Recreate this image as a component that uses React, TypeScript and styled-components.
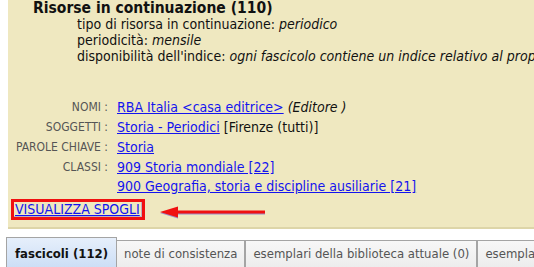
import React from "react";
import styled, { createGlobalStyle } from "styled-components";

const Global = createGlobalStyle`
  html, body { margin: 0; padding: 0; background: #ffffff; overflow: hidden; }
  body { font-family: "DejaVu Sans Condensed", "DejaVu Sans", sans-serif; font-stretch: condensed; }
`;

const Page = styled.div`
  width: 534px;
  height: 267px;
  overflow: hidden;
`;

const Panel = styled.section`
  margin-left: 8px;
  height: 229px;
  box-sizing: border-box;
  background: #efe8c0;
  border-bottom: 2px solid #ddd5a8;
  color: #111;
  font-size: 14px;
  overflow: hidden;
`;

const Title = styled.h3`
  margin: 0 0 0 25px;
  font-size: 15.5px;
  font-weight: bold;
  line-height: 16px;
  color: #111;
`;

const Details = styled.div`
  margin-left: 69px;
  line-height: 16px;
  white-space: nowrap;
`;

const Em = styled.i`
  font-style: italic;
`;

const Rows = styled.div`
  margin-top: 33px;
  display: flex;
  flex-direction: column;
`;

const Row = styled.div`
  display: grid;
  grid-template-columns: 100px 1fr;
  column-gap: 9px;
  line-height: 20px;
`;

const Label = styled.div`
  text-align: right;
  color: #555;
  font-size: 12px;
  white-space: nowrap;
`;

const Values = styled.div`
  display: flex;
  flex-direction: column;
  white-space: nowrap;
  & > span + span {
    line-height: 19px;
  }
`;

const Link = styled.a`
  color: #1414ee;
  text-decoration: underline;
  cursor: pointer;
`;

const Plain = styled.span`
  color: #111;
`;

const ActionRow = styled.div`
  margin-top: 3px;
  margin-left: 3px;
  display: flex;
  align-items: center;
`;

const Highlight = styled.div`
  border: 3px solid #f01010;
  padding: 0 2px 0 1px;
  line-height: 15px;
  font-size: 14px;
  box-shadow: inset -1px -1px 0 rgba(90, 70, 200, 0.35);
`;

const Arrow = styled.svg`
  margin-left: 15px;
  margin-top: 4px;
  display: block;
  filter: drop-shadow(0 1px 0 rgba(90, 60, 200, 0.55));
`;

const Tabs = styled.nav`
  margin-top: 8px;
  margin-left: 6px;
  display: flex;
  align-items: flex-start;
  height: 34px;
`;

const Tab = styled.div<{ $active?: boolean }>`
  box-sizing: border-box;
  margin-top: ${(p) => (p.$active ? "0" : "3px")};
  height: ${(p) => (p.$active ? "34px" : "31px")};
  padding: ${(p) => (p.$active ? "8px 8px 0" : "5px 7px 0")};
  line-height: 16px;
  font-size: 13px;
  white-space: nowrap;
  border: 1px solid #a4a4a4;
  border-left-width: ${(p) => (p.$active ? "1px" : "0")};
  border-right-width: ${(p) => (p.$active ? "1px" : "2px")};
  border-bottom: none;
  font-weight: ${(p) => (p.$active ? "bold" : "normal")};
  color: ${(p) => (p.$active ? "#111" : "#555")};
  background: ${(p) =>
    p.$active
      ? "linear-gradient(#e6effb, #c9dcf5)"
      : "linear-gradient(#f7f7f7, #ebebeb)"};
`;

export default function App() {
  return (
    <Page>
      <Global />
      <Panel>
        <Title>Risorse in continuazione (110)</Title>
        <Details>
          <div>
            tipo di risorsa in continuazione: <Em>periodico</Em>
          </div>
          <div>
            periodicità: <Em>mensile</Em>
          </div>
          <div>
            disponibilità dell'indice:{" "}
            <Em>ogni fascicolo contiene un indice relativo al proprio contenuto</Em>
          </div>
        </Details>
        <Rows>
          <Row>
            <Label>NOMI :</Label>
            <Values>
              <span>
                <Link>RBA Italia &lt;casa editrice&gt;</Link> <Em>(Editore )</Em>
              </span>
            </Values>
          </Row>
          <Row>
            <Label>SOGGETTI :</Label>
            <Values>
              <span>
                <Link>Storia - Periodici</Link> <Plain>[Firenze (tutti)]</Plain>
              </span>
            </Values>
          </Row>
          <Row>
            <Label>PAROLE CHIAVE :</Label>
            <Values>
              <span>
                <Link>Storia</Link>
              </span>
            </Values>
          </Row>
          <Row>
            <Label>CLASSI :</Label>
            <Values>
              <span>
                <Link>909 Storia mondiale [22]</Link>
              </span>
              <span>
                <Link>900 Geografia, storia e discipline ausiliarie [21]</Link>
              </span>
            </Values>
          </Row>
        </Rows>
        <ActionRow>
          <Highlight>
            <Link>VISUALIZZA SPOGLI</Link>
          </Highlight>
          <Arrow width="105" height="12" viewBox="0 0 105 12">
            <polygon points="0,6 18,0.5 18,11.5" fill="#f01010" />
            <rect x="16" y="4.5" width="89" height="3" fill="#f01010" />
          </Arrow>
        </ActionRow>
      </Panel>
      <Tabs>
        <Tab $active>fascicoli (112)</Tab>
        <Tab>note di consistenza</Tab>
        <Tab>esemplari della biblioteca attuale (0)</Tab>
        <Tab>esemplari di altre biblioteche</Tab>
      </Tabs>
    </Page>
  );
}
